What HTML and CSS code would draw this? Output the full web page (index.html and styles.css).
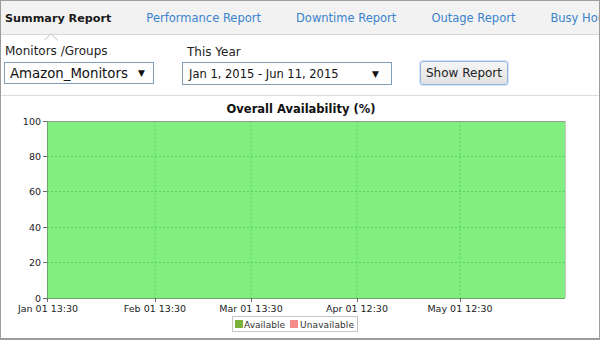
FILE: index.html
```html
<!DOCTYPE html>
<html lang="en">
<head>
    <meta charset="UTF-8">
    <title>Summary Report</title>
    <link rel="stylesheet" href="styles.css">
</head>
<body>
    <div class="frame">
        <nav class="tabs">
            <a class="tab active" href="#">Summary Report</a>
            <span class="sep"></span>
            <a class="tab" href="#">Performance Report</a>
            <span class="sep"></span>
            <a class="tab" href="#">Downtime Report</a>
            <span class="sep"></span>
            <a class="tab" href="#">Outage Report</a>
            <span class="sep"></span>
            <a class="tab" href="#">Busy Hours Report</a>
        </nav>

        <form class="filters">
            <div class="field field-monitor">
                <label>Monitors /Groups</label>
                <div class="select select-monitor">
                    <span>Amazon_Monitors</span>
                    <span class="caret">&#9660;</span>
                </div>
            </div>
            <div class="field field-period">
                <label>This Year</label>
                <div class="select select-period">
                    <span>Jan 1, 2015 - Jun 11, 2015</span>
                    <span class="caret">&#9660;</span>
                </div>
            </div>
            <button type="button" class="btn">Show Report</button>
        </form>

        <div class="chart">
            <svg width="598" height="242" viewBox="1 96 598 242">
                <text class="title" x="301" y="113" text-anchor="middle">Overall Availability (%)</text>

                <rect x="47" y="121" width="518" height="177" fill="#80ef80"/>

                <g class="grid">
                    <line x1="155" y1="121" x2="155" y2="298"/>
                    <line x1="251" y1="121" x2="251" y2="298"/>
                    <line x1="357" y1="121" x2="357" y2="298"/>
                    <line x1="460" y1="121" x2="460" y2="298"/>
                    <line x1="47" y1="156.5" x2="565" y2="156.5"/>
                    <line x1="47" y1="191.5" x2="565" y2="191.5"/>
                    <line x1="47" y1="227.5" x2="565" y2="227.5"/>
                    <line x1="47" y1="262.5" x2="565" y2="262.5"/>
                </g>

                <line x1="47" y1="121.5" x2="565" y2="121.5" stroke="#9a9a9a"/>
                <line x1="565.5" y1="121" x2="565.5" y2="298" stroke="#c8c8c8"/>
                <line x1="47.5" y1="121" x2="47.5" y2="298" stroke="#6aa86a"/>
                <line x1="47" y1="298.5" x2="565" y2="298.5" stroke="#6aa86a"/>

                <g class="ticks">
                    <line x1="43" y1="121.5" x2="47" y2="121.5"/>
                    <line x1="43" y1="156.5" x2="47" y2="156.5"/>
                    <line x1="43" y1="191.5" x2="47" y2="191.5"/>
                    <line x1="43" y1="227.5" x2="47" y2="227.5"/>
                    <line x1="43" y1="262.5" x2="47" y2="262.5"/>
                    <line x1="43" y1="298.5" x2="47" y2="298.5"/>
                    <line x1="47.5" y1="298" x2="47.5" y2="302"/>
                    <line x1="155.5" y1="298" x2="155.5" y2="302"/>
                    <line x1="251.5" y1="298" x2="251.5" y2="302"/>
                    <line x1="357.5" y1="298" x2="357.5" y2="302"/>
                    <line x1="460.5" y1="298" x2="460.5" y2="302"/>
                </g>

                <g class="axis" text-anchor="end">
                    <text x="41" y="125">100</text>
                    <text x="41" y="160">80</text>
                    <text x="41" y="195">60</text>
                    <text x="41" y="231">40</text>
                    <text x="41" y="266">20</text>
                    <text x="41" y="302">0</text>
                </g>
                <g class="axis" text-anchor="middle">
                    <text x="48" y="312">Jan 01 13:30</text>
                    <text x="155" y="312">Feb 01 13:30</text>
                    <text x="251" y="312">Mar 01 13:30</text>
                    <text x="357" y="312">Apr 01 12:30</text>
                    <text x="460" y="312">May 01 12:30</text>
                </g>

                <rect x="232.5" y="316.5" width="125" height="15" fill="#fff" stroke="#c4c4c4"/>
                <rect x="235" y="320" width="8" height="8" fill="#7cb13e"/>
                <text class="legend" x="244" y="328" textLength="41">Available</text>
                <rect x="290" y="320" width="8" height="8" fill="#f58a8a"/>
                <text class="legend" x="300" y="328" textLength="54">Unavailable</text>
            </svg>
        </div>
    </div>
</body>
</html>
```

FILE: styles.css
```css
body {
    margin: 0;
    font-family: "DejaVu Sans", Verdana, sans-serif;
    background: #fff;
}
.frame {
    width: 600px;
    height: 340px;
    box-sizing: border-box;
    border: 1px solid #9c9c9c;
    border-bottom-width: 2px;
    display: flex;
    flex-direction: column;
    overflow: hidden;
}
.tabs {
    display: flex;
    align-items: center;
    height: 33px;
    flex-shrink: 0;
    background: #f2f2f2;
    border-bottom: 1px solid #d8d8d8;
    white-space: nowrap;
    padding-left: 4px;
}
.tab {
    position: relative;
    text-decoration: none;
    font-size: 11.5px;
    color: #3a82cb;
    padding-top: 1px;
}
.tab.active {
    color: #1a1a1a;
    font-weight: bold;
    font-size: 11.2px;
}
.tab.active::after {
    content: "";
    position: absolute;
    left: 41px;
    top: 24px;
    width: 9px;
    height: 9px;
    background: #fff;
    border-left: 1px solid #d0d0d0;
    border-top: 1px solid #d0d0d0;
    transform: rotate(45deg);
}
.sep {
    width: 1px;
    height: 9px;
    background: #c4c4c4;
    margin: 0 18px 0 17px;
}
.filters {
    display: flex;
    align-items: flex-start;
    flex-shrink: 0;
    border-bottom: 1px solid #dcdcdc;
    box-sizing: border-box;
    height: 61px;
    padding: 9px 0 0 3px;
}
.field {
    display: flex;
    flex-direction: column;
}
.field label {
    font-size: 12px;
    color: #222;
    height: 18px;
    padding-left: 1px;
}
.field-period {
    margin-left: 28px;
}
.field-period label {
    padding-left: 5px;
    margin-top: 1px;
    height: 17px;
}
.select {
    display: flex;
    align-items: center;
    justify-content: space-between;
    box-sizing: border-box;
    border: 1px solid #7f9db9;
    background: #fff;
    color: #111;
}
.select-monitor {
    width: 150px;
    height: 22px;
    font-size: 13.3px;
    padding: 0 8px 0 5px;
}
.select-period {
    width: 210px;
    height: 23px;
    font-size: 11.5px;
    padding: 0 12px 0 6px;
}
.caret {
    font-size: 9px;
}
.btn {
    margin: 17px 0 0 28px;
    width: 88px;
    height: 24px;
    font-family: "DejaVu Sans", Verdana, sans-serif;
    font-size: 12px;
    color: #222;
    border: 1px solid #8fb4e6;
    border-radius: 3px;
    background: linear-gradient(#f6f6f6, #e2e2e2);
    padding: 0;
    box-shadow: 0 0 0 1px #d6e4f6;
}
.chart {
    flex: 1;
}
.chart svg {
    display: block;
}
.title {
    font-family: "DejaVu Sans", Verdana, sans-serif;
    font-size: 11.5px;
    font-weight: bold;
    fill: #111;
}
.grid line {
    stroke: #5cd25c;
    stroke-dasharray: 2 2;
}
.ticks line {
    stroke: #6a6a6a;
}
.axis text {
    font-family: "DejaVu Sans", sans-serif;
    font-size: 9.5px;
    fill: #222;
}
.legend {
    font-family: "DejaVu Sans", sans-serif;
    font-size: 9px;
    fill: #333;
}
```
